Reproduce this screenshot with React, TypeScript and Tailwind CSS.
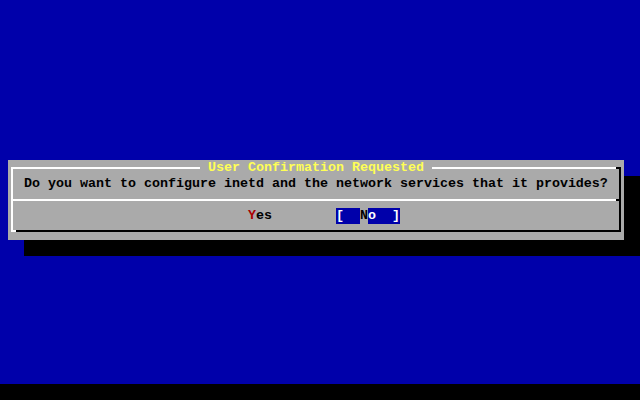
import React from "react";

export default function App() {
  return (
    <div
      className="w-[640px] h-[400px] bg-[#0000aa] flex flex-col overflow-hidden text-[13.333px] leading-[16px] font-bold whitespace-pre text-black"
      style={{ fontFamily: '"Liberation Mono", "DejaVu Sans Mono", monospace' }}
    >
      {/* dialog */}
      <div className="mt-[160px] ml-[8px] w-[616px] h-[80px] bg-[#aaaaaa] shadow-[16px_16px_0_0_#000] pt-[7px] pl-[3px]">
        {/* frame */}
        <div className="w-[610px] h-[65px] border-l-2 border-l-white border-r-2 border-r-black flex flex-col">
          {/* top line */}
          <div className="h-[2px] flex shrink-0">
            <div className="flex-1 bg-white" />
            <div className="w-[3px] bg-black" />
          </div>
          {/* title */}
          <div className="-mt-[9px] h-[16px] flex justify-center shrink-0">
            <span className="bg-[#aaaaaa] text-[#ffff55] px-[8px]">User Confirmation Requested</span>
          </div>
          {/* message */}
          <div className="h-[16px] pl-[11px] shrink-0">
            Do you want to configure inetd and the network services that it provides?
          </div>
          {/* separator */}
          <div className="mt-[7px] h-[2px] flex shrink-0">
            <div className="flex-1 bg-white" />
            <div className="w-[3px] bg-black" />
          </div>
          {/* buttons */}
          <div className="mt-[7px] h-[16px] pl-[235px] flex shrink-0">
            <span>
              <span className="text-[#aa0000]">Y</span>es
            </span>
            <span className="ml-[64px] flex">
              <span className="bg-[#0000aa] text-white">[  </span>
              <span className="bg-[#aaaaaa] text-black">N</span>
              <span className="bg-[#0000aa] text-white">o  ]</span>
            </span>
          </div>
          <div className="flex-1" />
          {/* bottom line */}
          <div className="h-[2px] flex shrink-0">
            <div className="w-[3px] bg-white" />
            <div className="flex-1 bg-black" />
          </div>
        </div>
      </div>
      <div className="flex-1" />
      {/* status line */}
      <div className="h-[16px] bg-black shrink-0" />
    </div>
  );
}
